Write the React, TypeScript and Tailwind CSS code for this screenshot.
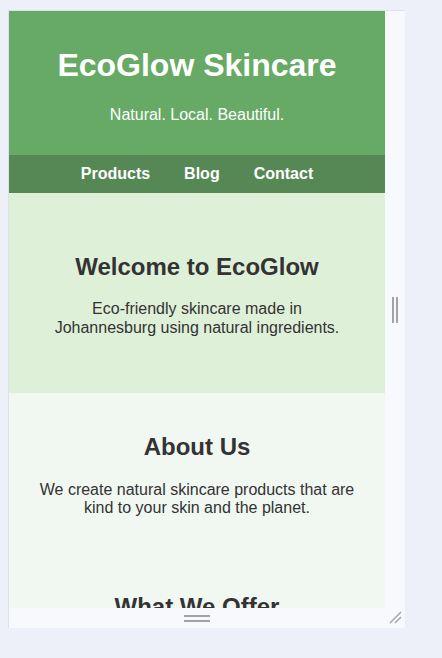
import React from 'react';

const font = { fontFamily: '"Liberation Sans", Arial, sans-serif' };

const Section: React.FC<{ title: string; text?: string; className: string }> = ({ title, text, className }) => (
  <section className={className}>
    <h2 className="my-[19.92px] text-[24px] leading-[27.6px] font-bold text-[#333]">{title}</h2>
    {text && <p className="my-4 text-[16px] leading-[18.4px] text-[#333]">{text}</p>}
  </section>
);

export default function App() {
  return (
    <div className="min-h-[658px] w-full bg-[#edf0f8] pl-[8px] pt-[10px]" style={font}>
      <div className="w-[397px] border-l border-t border-[#dde1ea] bg-[#f8f9fd]">
        <div className="flex">
          {/* page preview */}
          <div className="h-[597px] w-[376px] overflow-hidden text-center">
            <header className="bg-[#66aa66] pt-[36px] pb-[31px] text-white">
              <h1 className="text-[32px] leading-[37px] font-bold">EcoGlow Skincare</h1>
              <p className="mt-[22px] text-[16px] leading-[18px]">Natural. Local. Beautiful.</p>
            </header>
            <nav className="flex justify-center gap-[34px] bg-[#558855] py-[10px] text-[16px] leading-[18px] font-bold text-white">
              <a>Products</a>
              <a>Blog</a>
              <a>Contact</a>
            </nav>
            <Section
              className="bg-[#dff0d8] px-10 py-10 flow-root"
              title="Welcome to EcoGlow"
              text="Eco-friendly skincare made in Johannesburg using natural ingredients."
            />
            <Section
              className="bg-[#f1f8f1] p-5 flow-root"
              title="About Us"
              text="We create natural skincare products that are kind to your skin and the planet."
            />
            <Section className="bg-[#f1f8f1] p-5 flow-root" title="What We Offer" />
          </div>
          {/* vertical drag handle */}
          <div className="flex w-[20px] items-center justify-center gap-[2px]">
            <span className="h-[26px] w-[2px] bg-[#a3a3a3]" />
            <span className="h-[26px] w-[2px] bg-[#a3a3a3]" />
          </div>
        </div>
        <div className="relative flex h-[20px] w-[376px] flex-col items-center justify-center gap-[3px]">
          <span className="h-[2px] w-[26px] bg-[#a3a3a3]" />
          <span className="h-[2px] w-[26px] bg-[#a3a3a3]" />
          <svg className="absolute left-[380px] top-[3px]" width="13" height="13" viewBox="0 0 13 13">
            <line x1="12" y1="1" x2="1" y2="12" stroke="#a3a3a3" strokeWidth="1.5" />
            <line x1="12" y1="6" x2="6" y2="12" stroke="#a3a3a3" strokeWidth="1.5" />
          </svg>
        </div>
      </div>
    </div>
  );
}
